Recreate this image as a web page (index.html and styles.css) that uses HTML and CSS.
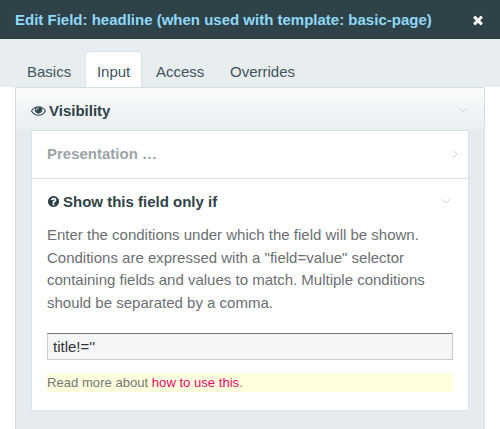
FILE: index.html
```html
<!DOCTYPE html>
<html lang="en">
<head>
<meta charset="utf-8">
<title>Edit Field</title>
<link rel="stylesheet" href="styles.css">
</head>
<body>
<header class="titlebar">
  <h1 class="title">Edit Field: headline (when used with template: basic-page)</h1>
  <svg class="close" viewBox="0 0 1792 1792"><path d="M1490 1322q0 40-28 68l-136 136q-28 28-68 28t-68-28l-294-294-294 294q-28 28-68 28t-68-28l-136-136q-28-28-28-68t28-68l294-294-294-294q-28-28-28-68t28-68l136-136q28-28 68-28t68 28l294 294 294-294q28-28 68-28t68 28l136 136q28 28 28 68t-28 68l-294 294 294 294q28 28 28 68z"/></svg>
</header>
<nav class="tabs">
  <a class="tab">Basics</a>
  <a class="tab tab-active">Input</a>
  <a class="tab">Access</a>
  <a class="tab">Overrides</a>
</nav>
<main class="panel">
  <div class="panel-head">
    <svg class="icon-eye" viewBox="0 0 1792 1792"><path d="M1664 960q-152-236-381-353 61 104 61 225 0 185-131.500 316.500t-316.500 131.500-316.500-131.500-131.500-316.500q0-121 61-225-229 117-381 353 133 205 333.500 326.500t434.500 121.500 434.500-121.500 333.500-326.500zm-720-384q0-20-14-34t-34-14q-125 0-214.500 89.500t-89.500 214.500q0 20 14 34t34 14 34-14 14-34q0-86 61-147t147-61q20 0 34-14t14-34zm848 384q0 34-20 69-140 230-376.500 368.500t-499.500 138.500-499.500-139-376.500-368q-20-35-20-69t20-69q140-229 376.500-368t499.500-139 499.500 139 376.500 368q20 35 20 69z"/></svg>
    <span class="head-text">Visibility</span>
    <svg class="chev chev-panel" viewBox="0 0 10 6"><path d="M1 1l4 4 4-4"/></svg>
  </div>
  <div class="inner">
    <div class="row-closed">
      <span class="closed-text">Presentation …</span>
      <svg class="chev-right" viewBox="0 0 6 10"><path d="M1 1l4 4-4 4"/></svg>
    </div>
    <section class="field">
      <div class="field-head">
        <svg class="icon-q" viewBox="0 0 1792 1792"><path d="M1024 1376v-192q0-14-9-23t-23-9h-192q-14 0-23 9t-9 23v192q0 14 9 23t23 9h192q14 0 23-9t9-23zm256-672q0-88-55.500-163t-138.500-116-170-41q-243 0-371 213-15 24 8 42l132 100q7 6 19 6 16 0 25-12 53-68 86-92 34-24 86-24 48 0 85.500 26t37.500 59q0 38-20 61t-68 45q-63 28-115.500 86.500t-52.500 125.500v36q0 14 9 23t23 9h192q14 0 23-9t9-23q0-19 21.500-49.500t54.500-49.500q32-18 49-28.500t46-35 44.500-48 28-60.500 12.500-81zm384 192q0 209-103 385.500t-279.500 279.500-385.500 103-385.500-103-279.500-279.500-103-385.500 103-385.500 279.500-279.500 385.500-103 385.500 103 279.500 279.500 103 385.500z"/></svg>
        <span class="head-text">Show this field only if</span>
        <svg class="chev chev-field" viewBox="0 0 10 6"><path d="M1 1l4 4 4-4"/></svg>
      </div>
      <p class="desc">Enter the conditions under which the field will be shown. Conditions are expressed with a "field=value" selector containing fields and values to match. Multiple conditions should be separated by a comma.</p>
      <input class="text-input" type="text" value="title!=''">
      <p class="notes">Read more about <a class="link">how to use this</a>.</p>
    </section>
  </div>
</main>
</body>
</html>
```
FILE: styles.css
```css
* { box-sizing: border-box; }
html, body { margin: 0; padding: 0; }
body {
  width: 500px;
  height: 429px;
  overflow: hidden;
  background: #fff;
  font-family: "Liberation Sans", Arial, sans-serif;
  color: #354b54;
}
.titlebar {
  height: 39px;
  background: #2f4248;
  display: flex;
  align-items: center;
  justify-content: space-between;
  padding: 0 15px;
}
.title {
  margin: 0;
  font-size: 15px;
  font-weight: bold;
  color: #8fd8f8;
}
.close { width: 14px; height: 14px; fill: #fff; }
.tabs {
  height: 48px;
  background: #e8edf0;
  padding: 12px 15px 0;
  display: flex;
  gap: 1.7px;
}
.tab {
  height: 36px;
  padding: 0 11px;
  font-size: 15px;
  line-height: 39px;
  color: #3f545c;
  border: 1px solid transparent;
  border-bottom: 0;
}
.tab-active {
  background: #fff;
  border-color: #d6e3e9;
  border-radius: 5px 5px 0 0;
}
.panel {
  margin: 0 15px;
  height: 342px;
  background: #e6ebef;
  border: 1px solid #d2dfe5;
  border-bottom: 0;
}
.panel-head {
  height: 42px;
  display: flex;
  align-items: center;
  padding: 2px 15px 0;
  gap: 3px;
  background: linear-gradient(#fbfcfd, #e9eef1);
}
.head-text { font-size: 15px; font-weight: bold; color: #2f4248; }
.icon-eye { width: 15px; height: 15px; fill: #354b54; }
.icon-q { width: 13px; height: 13px; fill: #2f4248; }
.chev { width: 10px; height: 6px; fill: none; stroke: #ccd6db; stroke-width: 1; margin-left: auto; }
.chev-panel { margin-right: 1px; }
.chev-field { margin-right: 2px; }
.chev-right { width: 6px; height: 10px; fill: none; stroke: #ccd6db; stroke-width: 1; margin-right: -1px; }
.inner {
  margin: 0 15px;
  height: 281px;
  background: #fff;
  border: 1px solid #d6e3e9;
}
.row-closed {
  height: 48px;
  display: flex;
  align-items: center;
  justify-content: space-between;
  padding: 0 11px 2px 15px;
  border-bottom: 1px solid #d6e3e9;
}
.closed-text { font-size: 15px; font-weight: bold; color: #9aa4a8; }
.field { padding: 0 15px; }
.field-head {
  height: 45px;
  padding-bottom: 1px;
  display: flex;
  align-items: center;
  gap: 3px;
}
.desc {
  margin: 0 0 19px;
  font-size: 15px;
  line-height: 22.5px;
  color: #6b6f72;
}
.text-input {
  display: block;
  width: 406px;
  height: 27px;
  padding: 0 5px;
  background: #f5f6f8;
  border: 1px solid #c9cccf;
  border-top-color: #777;
  font-family: inherit;
  font-size: 15px;
  color: #333;
  outline: none;
}
.notes {
  margin: 13px 0 0;
  height: 19px;
  line-height: 19px;
  background: #ffffdd;
  font-size: 13.1px;
  color: #777;
}
.link { color: #e8066c; }
```
